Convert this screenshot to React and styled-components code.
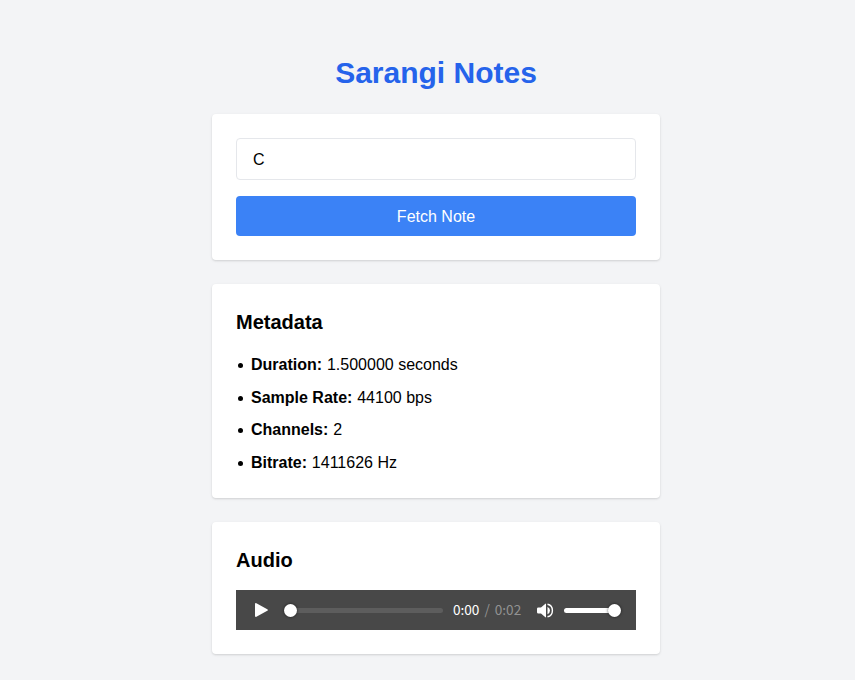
import React, { useState } from "react";
import styled, { createGlobalStyle } from "styled-components";

const GlobalStyle = createGlobalStyle`
  *, *::before, *::after { box-sizing: border-box; }
  body {
    margin: 0;
    background: #f3f4f6;
    color: #000;
    font-family: "Liberation Sans", Arial, sans-serif;
    font-size: 16px;
    line-height: 24px;
  }
`;

const Page = styled.main`
  width: 448px;
  min-height: 680px;
  margin-left: 212px;
  padding-top: 55px;
`;

const Title = styled.h1`
  margin: 0 0 23px;
  color: #2563eb;
  font-size: 30px;
  line-height: 36px;
  font-weight: 700;
  text-align: center;
`;

const Stack = styled.div`
  display: flex;
  flex-direction: column;
  gap: 24px;
`;

const Card = styled.section`
  padding: 24px;
  background: #fff;
  border-radius: 4px;
  box-shadow: 0 1px 3px rgba(0, 0, 0, 0.1), 0 1px 2px rgba(0, 0, 0, 0.06);
`;

const Heading = styled.h2`
  margin: 0 0 16px;
  font-size: 20px;
  line-height: 28px;
  font-weight: 700;
`;

const NoteInput = styled.input`
  display: block;
  width: 100%;
  height: 42px;
  margin: 0 0 16px;
  padding: 9px 16px 7px;
  border: 1px solid #e5e7eb;
  border-radius: 4px;
  outline: none;
  background: #fff;
  color: #000;
  font: inherit;
`;

const FetchButton = styled.button`
  display: block;
  width: 100%;
  height: 40px;
  padding: 9px 16px 7px;
  border: 0;
  border-radius: 4px;
  background: #3b82f6;
  color: #fff;
  font: inherit;
`;

const MetaList = styled.ul`
  display: flex;
  flex-direction: column;
  gap: 8px;
  margin: 0;
  padding: 0;
  list-style: none;
`;

const MetaItem = styled.li`
  display: flex;
  align-items: center;
  height: 24.5px;
  padding-top: 1.8px;
  white-space: pre;

  &::before {
    content: "";
    width: 5px;
    height: 5px;
    margin: 1px 8px 0 2px;
    border-radius: 50%;
    background: #000;
  }
`;

const MetaLabel = styled.strong`
  margin-right: 0.4px;
`;

const Player = styled.div`
  display: flex;
  align-items: center;
  height: 40px;
  padding-left: 19px;
  background: #484848;
  color: #fff;
`;

const PlayIcon = styled.svg`
  flex: none;
  width: 13px;
  height: 14px;
  margin-right: 17px;
`;

const Track = styled.div`
  display: flex;
  flex: none;
  align-items: center;
  justify-content: ${(p) => (p.$full ? "flex-end" : "flex-start")};
  width: ${(p) => p.$width}px;
  height: 5px;
  margin-top: 1px;
  border-radius: 3px;
  background: ${(p) => (p.$full ? "#fff" : "#5d5d5d")};
`;

const Thumb = styled.div`
  flex: none;
  width: 13px;
  height: 13px;
  margin: 0 -1px 0 -1px;
  border-radius: 50%;
  background: #fff;
  box-shadow: 0 0 3px rgba(0, 0, 0, 0.65);
`;

const Time = styled.div`
  display: flex;
  flex: none;
  gap: 5px;
  width: 94px;
  padding: 0 0 2px 10px;
  color: #929292;
  font-family: "Noto Sans CJK SC", "Noto Sans", sans-serif;
  font-size: 13.6px;
  line-height: 20px;
`;

const Elapsed = styled.span`
  color: #fff;
`;

const VolumeIcon = styled.svg`
  flex: none;
  width: 17px;
  height: 15px;
  margin-right: 10px;
`;

const metadata = [
  ["Duration", "1.500000 seconds"],
  ["Sample Rate", "44100 bps"],
  ["Channels", "2"],
  ["Bitrate", "1411626 Hz"],
];

export default function App() {
  const [note, setNote] = useState("C");
  return (
    <>
      <GlobalStyle />
      <Page>
        <Title>Sarangi Notes</Title>
        <Stack>
          <Card>
            <NoteInput value={note} onChange={(e) => setNote(e.target.value)} aria-label="Note" />
            <FetchButton type="button">Fetch Note</FetchButton>
          </Card>
          <Card>
            <Heading>Metadata</Heading>
            <MetaList>
              {metadata.map(([label, value]) => (
                <MetaItem key={label}>
                  <span>
                    <MetaLabel>{label}:</MetaLabel> {value}
                  </span>
                </MetaItem>
              ))}
            </MetaList>
          </Card>
          <Card>
            <Heading>Audio</Heading>
            <Player>
              <PlayIcon viewBox="0 0 13 14" fill="#fff" role="img" aria-label="Play">
                <path d="M0 1.2Q0-.4 1.4.3L12.3 6.2Q13.5 7 12.3 7.8L1.4 13.7Q0 14.4 0 12.8Z" />
              </PlayIcon>
              <Track $width={158}>
                <Thumb />
              </Track>
              <Time>
                <Elapsed>0:00</Elapsed>
                <span>/</span>
                <span>0:02</span>
              </Time>
              <VolumeIcon viewBox="0 0 17 15" role="img" aria-label="Volume">
                <path d="M1.4 4.5H4L8.4.7Q9 .3 9 1.2V13.8Q9 14.7 8.4 14.3L4 10.5H1.4Q0 10.5 0 9.2V5.8Q0 4.5 1.4 4.5Z" fill="#fff" />
                <path d="M10.5 3.8Q13 5.2 13 7.5T10.5 11.2Z" fill="#fff" />
                <path d="M10.5 1.2C13.8 1.8 15.4 4.6 15.4 7.5S13.8 13.2 10.5 13.8" fill="none" stroke="#fff" strokeWidth="1.4" />
              </VolumeIcon>
              <Track $full $width={56}>
                <Thumb />
              </Track>
            </Player>
          </Card>
        </Stack>
      </Page>
    </>
  );
}
